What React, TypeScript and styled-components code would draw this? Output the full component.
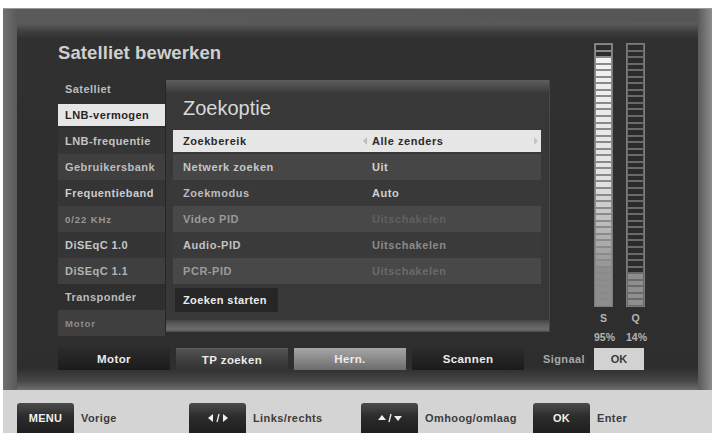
import React from 'react';
import styled, { createGlobalStyle } from 'styled-components';

const GlobalStyle = createGlobalStyle`
  html, body {
    margin: 0;
    padding: 0;
    background: #ffffff;
  }
  body {
    font-family: "Liberation Sans", Arial, sans-serif;
    -webkit-font-smoothing: antialiased;
  }
`;

const Page = styled.div`
  width: 715px;
  height: 437px;
  box-sizing: border-box;
  padding: 8px 3px 0 3px;
  display: flex;
  flex-direction: column;
`;

const Frame = styled.div`
  height: 382px;
  box-sizing: border-box;
  padding: 14px 14px 0 14px;
  display: flex;
  background: linear-gradient(90deg, #707070 0, #5a5a5a 14px, #565656 calc(100% - 15px), #8c8c8c 100%);
  border-top: 1px solid #9a9a9a;
`;

const Screen = styled.div`
  flex: 1;
  box-sizing: border-box;
  padding: 20px 53px 20px 41px;
  display: flex;
  flex-direction: column;
  background: linear-gradient(180deg, #5c5c5c 0, #3e3e3e 9px, #303030 16px, #2e2e2e calc(100% - 22px), #474747 calc(100% - 9px), #6e6e6e 100%);
`;

const TopSection = styled.div`
  height: 301px;
  display: flex;
  gap: 44px;
`;

const LeftColumn = styled.div`
  width: 492px;
  display: flex;
  flex-direction: column;
`;

const Title = styled.div`
  height: 33px;
  font-size: 18.5px;
  line-height: 20px;
  font-weight: bold;
  color: #cfcfcf;
  letter-spacing: 0.1px;
`;

const Main = styled.div`
  display: flex;
  align-items: flex-start;
`;

const List = styled.div`
  width: 107px;
  display: flex;
  flex-direction: column;
`;

const listBg = {
  none: 'transparent',
  a: '#353535',
  b: '#3f3f3f',
};

const ListRow = styled.div<{ $tone: keyof typeof listBg; $selected?: boolean; $color: string; $small?: boolean }>`
  height: 26px;
  box-sizing: border-box;
  padding: ${(p) => (p.$selected ? '2px 0' : '0')};
  background: ${(p) => (p.$selected ? '#e6e6e6' : listBg[p.$tone])};
  background-clip: content-box;
  display: flex;
  align-items: center;
  & > span {
    padding-left: 7px;
    font-size: ${(p) => (p.$small ? '9.5px' : '11px')};
    letter-spacing: ${(p) => (p.$small ? '0.9px' : '0.45px')};
    font-weight: bold;
    color: ${(p) => (p.$selected ? '#262626' : p.$color)};
    white-space: nowrap;
  }
`;

const Popup = styled.div`
  width: 385px;
  height: 252px;
  margin-top: 4px;
  display: flex;
  flex-direction: column;
  background: #383838;
  border-left: 1px solid #262626;
  border-right: 1px solid #474747;
  box-sizing: border-box;
`;

const PopupTop = styled.div`
  height: 13px;
  background: linear-gradient(180deg, #5e5e5e 0, #4c4c4c 50%, #3a3a3a 100%);
`;

const PopupTitle = styled.div`
  height: 35px;
  line-height: 30px;
  padding-left: 17px;
  font-size: 20px;
  color: #d8d8d8;
`;

const Options = styled.div`
  margin: 0 8px 0 7px;
  display: flex;
  flex-direction: column;
`;

const OptionRow = styled.div<{ $bg: string; $selected?: boolean }>`
  height: 26px;
  box-sizing: border-box;
  padding: ${(p) => (p.$selected ? '2px 0' : '0')};
  background: ${(p) => (p.$selected ? '#e6e6e6' : p.$bg)};
  background-clip: content-box;
  display: flex;
  align-items: center;
  font-size: 11px;
  font-weight: bold;
  letter-spacing: 0.55px;
  white-space: nowrap;
`;

const OptionLabel = styled.span<{ $color: string }>`
  width: 199px;
  box-sizing: border-box;
  padding-left: 10px;
  color: ${(p) => p.$color};
`;

const OptionValue = styled.span<{ $color: string }>`
  flex: 1;
  color: ${(p) => p.$color};
`;

const Arrow = styled.span<{ $dir: 'left' | 'right' }>`
  width: 0;
  height: 0;
  border-top: 4px solid transparent;
  border-bottom: 4px solid transparent;
  ${(p) =>
    p.$dir === 'left'
      ? 'border-right: 4px solid #bdbdbd; margin-left: -9px; margin-right: 5px;'
      : 'border-left: 4px solid #c4c4c4; margin-right: 3px;'}
`;

const StartButton = styled.div`
  width: 103px;
  height: 24px;
  margin: 4px 0 0 9px;
  box-sizing: border-box;
  padding-left: 8px;
  display: flex;
  align-items: center;
  background: #262626;
  color: #ececec;
  font-size: 11px;
  font-weight: bold;
  letter-spacing: 0.4px;
`;

const PopupBottom = styled.div`
  height: 12px;
  margin-top: 8px;
  background: linear-gradient(180deg, #444 0, #5e5e5e 40%, #6c6c6c 80%, #4a4a4a 100%);
`;

const SignalColumn = styled.div`
  width: 51px;
  display: flex;
  flex-direction: column;
`;

const Bars = styled.div`
  height: 264px;
  display: flex;
  gap: 13px;
`;

const Bar = styled.div<{ $gap: string }>`
  width: 19px;
  box-sizing: border-box;
  border: 1px solid #7c7c7c;
  padding: 1px;
  display: flex;
  flex-direction: column;
  gap: 2px;
  background: ${(p) => p.$gap};
`;

const Segment = styled.div<{ $tone: string }>`
  flex: 1;
  background: ${(p) => p.$tone};
`;

const SignalText = styled.div<{ $mt: number }>`
  margin-top: ${(p) => p.$mt}px;
  display: flex;
  gap: 13px;
  line-height: 14px;
  font-size: 10.5px;
  font-weight: bold;
  color: #b4b4b4;
  & > span {
    width: 19px;
    text-align: center;
    white-space: nowrap;
  }
`;

const ButtonRow = styled.div`
  margin-top: 4px;
  height: 22px;
  display: flex;
  align-items: stretch;
  gap: 6px;
`;

const buttonLook = {
  dark: 'background: linear-gradient(180deg, #2b2b2b 0, #222 60%, #1c1c1c 100%);',
  mid: 'background: linear-gradient(180deg, #535353 0, #3e3e3e 55%, #333 100%); border-top: 1px solid #5c5c5c;',
  focus: 'background: linear-gradient(180deg, #a6a6a6 0, #8a8a8a 50%, #6c6c6c 100%);',
};

const ActionButton = styled.div<{ $look: keyof typeof buttonLook }>`
  width: 112px;
  box-sizing: border-box;
  display: flex;
  align-items: center;
  justify-content: center;
  font-size: 11.5px;
  font-weight: bold;
  letter-spacing: 0.4px;
  color: #ececec;
  ${(p) => buttonLook[p.$look]}
`;

const SignalLabel = styled.div`
  margin-left: 13px;
  display: flex;
  align-items: center;
  font-size: 11px;
  font-weight: bold;
  letter-spacing: 0.4px;
  color: #a8a8a8;
`;

const SignalState = styled.div`
  margin-left: auto;
  margin-right: 1px;
  width: 50px;
  display: flex;
  align-items: center;
  justify-content: center;
  background: #d2d2d2;
  color: #3a3a3a;
  font-size: 11px;
  font-weight: bold;
`;

const Legend = styled.div`
  height: 43px;
  box-sizing: border-box;
  padding-left: 14px;
  display: grid;
  grid-template-columns: repeat(4, 172px);
  align-items: end;
  background: #d4d4d4;
`;

const LegendItem = styled.div`
  display: flex;
  align-items: center;
  gap: 7px;
`;

const Key = styled.div`
  width: 57px;
  height: 30px;
  border-radius: 3px 3px 0 0;
  display: flex;
  align-items: center;
  justify-content: center;
  background: linear-gradient(180deg, #4c4c4c 0, #2c2c2c 45%, #1e1e1e 100%);
  color: #f0f0f0;
  font-size: 11px;
  font-weight: bold;
  letter-spacing: 0.3px;
`;

const KeyLabel = styled.span`
  font-size: 11px;
  font-weight: bold;
  letter-spacing: 0.4px;
  color: #3c3c3c;
  white-space: nowrap;
`;

const LeftRightGlyph = () => (
  <svg width="22" height="10" viewBox="0 0 22 10">
    <path d="M6 1 L1 5 L6 9 Z" fill="#f0f0f0" />
    <path d="M12 1 L10 9" stroke="#f0f0f0" strokeWidth="1.3" />
    <path d="M16 1 L21 5 L16 9 Z" fill="#f0f0f0" />
  </svg>
);

const UpDownGlyph = () => (
  <svg width="26" height="10" viewBox="0 0 26 10">
    <path d="M1 7 L5 2 L9 7 Z" fill="#f0f0f0" />
    <path d="M14 1 L12 9" stroke="#f0f0f0" strokeWidth="1.3" />
    <path d="M17 3 L25 3 L21 8 Z" fill="#f0f0f0" />
  </svg>
);

const listItems: { label: string; tone: keyof typeof listBg; color: string; selected?: boolean; small?: boolean }[] = [
  { label: 'Satelliet', tone: 'none', color: '#bcbcbc' },
  { label: 'LNB-vermogen', tone: 'none', color: '#262626', selected: true },
  { label: 'LNB-frequentie', tone: 'a', color: '#c4c4c4' },
  { label: 'Gebruikersbank', tone: 'b', color: '#bdbdbd' },
  { label: 'Frequentieband', tone: 'a', color: '#cdcdcd' },
  { label: '0/22 KHz', tone: 'b', color: '#999999', small: true },
  { label: 'DiSEqC 1.0', tone: 'a', color: '#c6c6c6' },
  { label: 'DiSEqC 1.1', tone: 'b', color: '#b2b2b2' },
  { label: 'Transponder', tone: 'none', color: '#bcbcbc' },
  { label: 'Motor', tone: 'b', color: '#8c8c8c', small: true },
];

const options = [
  { label: 'Zoekbereik', value: 'Alle zenders', bg: '#e6e6e6', labelColor: '#2a2a2a', valueColor: '#2a2a2a', selected: true },
  { label: 'Netwerk zoeken', value: 'Uit', bg: '#464646', labelColor: '#c6c6c6', valueColor: '#d2d2d2' },
  { label: 'Zoekmodus', value: 'Auto', bg: '#393939', labelColor: '#bcbcbc', valueColor: '#d0d0d0' },
  { label: 'Video PID', value: 'Uitschakelen', bg: '#484848', labelColor: '#9a9a9a', valueColor: '#606060' },
  { label: 'Audio-PID', value: 'Uitschakelen', bg: '#3a3a3a', labelColor: '#c2c2c2', valueColor: '#8a8a8a' },
  { label: 'PCR-PID', value: 'Uitschakelen', bg: '#484848', labelColor: '#9c9c9c', valueColor: '#6a6a6a' },
];

const SEGMENTS = 40;

// tone of each S segment, top to bottom
const strengthTone = (i: number) => {
  if (i < 2) return '#2c2c2c';
  if (i < 22) {
    const v = Math.round(242 - (i - 2) * 0.9);
    return `rgb(${v},${v},${v})`;
  }
  if (i < 34) {
    const v = Math.round(218 - (i - 22) * 6);
    return `rgb(${v},${v},${v})`;
  }
  return '#8e8e8e';
};

const qualityTone = (i: number) => (i < 35 ? '#2b2b2b' : '#8e8e8e');

export default function App() {
  const segs = Array.from({ length: SEGMENTS }, (_, i) => i);
  return (
    <>
      <GlobalStyle />
      <Page>
        <Frame>
          <Screen>
            <TopSection>
              <LeftColumn>
                <Title>Satelliet bewerken</Title>
                <Main>
                  <List>
                    {listItems.map((it) => (
                      <ListRow key={it.label} $tone={it.tone} $selected={it.selected} $color={it.color} $small={it.small}>
                        <span>{it.label}</span>
                      </ListRow>
                    ))}
                  </List>
                  <Popup>
                    <PopupTop />
                    <PopupTitle>Zoekoptie</PopupTitle>
                    <Options>
                      {options.map((o) => (
                        <OptionRow key={o.label} $bg={o.bg} $selected={o.selected}>
                          <OptionLabel $color={o.labelColor}>{o.label}</OptionLabel>
                          {o.selected && <Arrow $dir="left" />}
                          <OptionValue $color={o.valueColor}>{o.value}</OptionValue>
                          {o.selected && <Arrow $dir="right" />}
                        </OptionRow>
                      ))}
                    </Options>
                    <StartButton>Zoeken starten</StartButton>
                    <PopupBottom />
                  </Popup>
                </Main>
              </LeftColumn>
              <SignalColumn>
                <Bars>
                  <Bar $gap="#8a8a8a">
                    {segs.map((i) => (
                      <Segment key={i} $tone={strengthTone(i)} />
                    ))}
                  </Bar>
                  <Bar $gap="#6a6a6a">
                    {segs.map((i) => (
                      <Segment key={i} $tone={qualityTone(i)} />
                    ))}
                  </Bar>
                </Bars>
                <SignalText $mt={4}>
                  <span>S</span>
                  <span>Q</span>
                </SignalText>
                <SignalText $mt={5}>
                  <span>95%</span>
                  <span>14%</span>
                </SignalText>
              </SignalColumn>
            </TopSection>
            <ButtonRow>
              <ActionButton $look="dark">Motor</ActionButton>
              <ActionButton $look="mid">TP zoeken</ActionButton>
              <ActionButton $look="focus">Hern.</ActionButton>
              <ActionButton $look="dark">Scannen</ActionButton>
              <SignalLabel>Signaal</SignalLabel>
              <SignalState>OK</SignalState>
            </ButtonRow>
          </Screen>
        </Frame>
        <Legend>
          <LegendItem>
            <Key>MENU</Key>
            <KeyLabel>Vorige</KeyLabel>
          </LegendItem>
          <LegendItem>
            <Key>
              <LeftRightGlyph />
            </Key>
            <KeyLabel>Links/rechts</KeyLabel>
          </LegendItem>
          <LegendItem>
            <Key>
              <UpDownGlyph />
            </Key>
            <KeyLabel>Omhoog/omlaag</KeyLabel>
          </LegendItem>
          <LegendItem>
            <Key>OK</Key>
            <KeyLabel>Enter</KeyLabel>
          </LegendItem>
        </Legend>
      </Page>
    </>
  );
}
